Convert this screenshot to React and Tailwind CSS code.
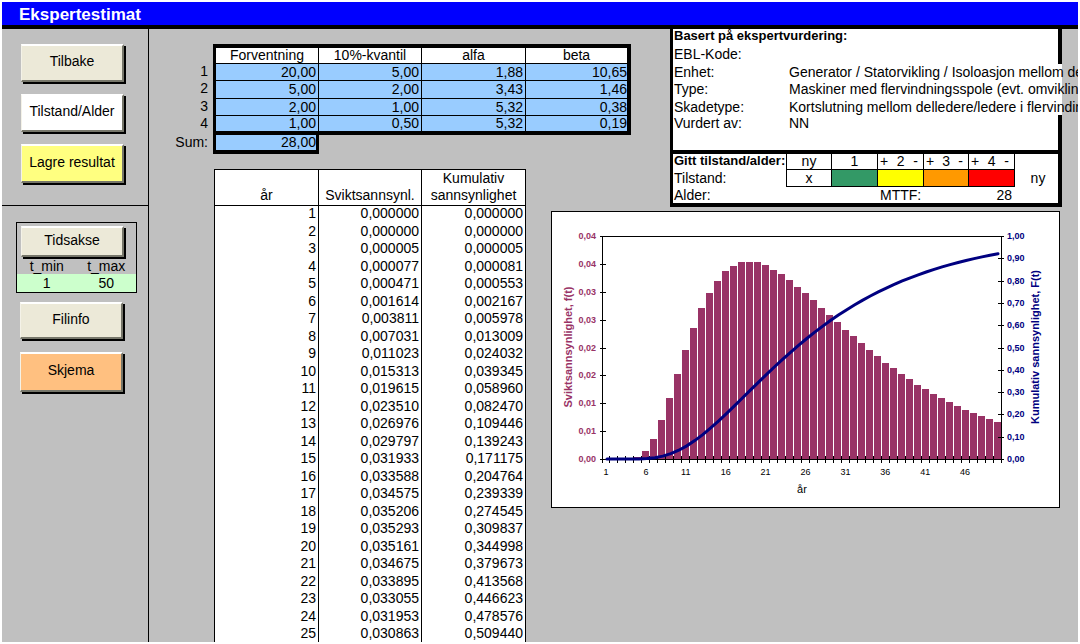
import React from 'react'

const params = [
  ['1', '20,00', '5,00', '1,88', '10,65'],
  ['2', '5,00', '2,00', '3,43', '1,46'],
  ['3', '2,00', '1,00', '5,32', '0,38'],
  ['4', '1,00', '0,50', '5,32', '0,19'],
]

const rows = [
  ['0,000000', '0,000000'],
  ['0,000000', '0,000000'],
  ['0,000005', '0,000005'],
  ['0,000077', '0,000081'],
  ['0,000471', '0,000553'],
  ['0,001614', '0,002167'],
  ['0,003811', '0,005978'],
  ['0,007031', '0,013009'],
  ['0,011023', '0,024032'],
  ['0,015313', '0,039345'],
  ['0,019615', '0,058960'],
  ['0,023510', '0,082470'],
  ['0,026976', '0,109446'],
  ['0,029797', '0,139243'],
  ['0,031933', '0,171175'],
  ['0,033588', '0,204764'],
  ['0,034575', '0,239339'],
  ['0,035206', '0,274545'],
  ['0,035293', '0,309837'],
  ['0,035161', '0,344998'],
  ['0,034675', '0,379673'],
  ['0,033895', '0,413568'],
  ['0,033055', '0,446623'],
  ['0,031953', '0,478576'],
  ['0,030863', '0,509440'],
]

// years 26-50, only shown in the chart
const tail = [
  0.0298, 0.0285, 0.0271, 0.0258, 0.0246, 0.0232, 0.022, 0.0208, 0.0196, 0.0185,
  0.0173, 0.0163, 0.0153, 0.0144, 0.0134, 0.0126, 0.0118, 0.011, 0.0103, 0.0096,
  0.0089, 0.0084, 0.0078, 0.0073, 0.0068,
]

const density = [...rows.map(([f]) => Number(f.replace(',', '.'))), ...tail]

const info = [
  { label: 'Enhet:', value: 'Generator / Statorvikling / Isoloasjon mellom delledere', height: 'h-[17px]' },
  { label: 'Type:', value: 'Maskiner med flervindningsspole (evt. omvikling)', height: 'h-[18px]' },
  { label: 'Skadetype:', value: 'Kortslutning mellom delledere/ledere i flervindingsspole', height: 'h-[16px]' },
]

const Button = ({ children, className }) => (
  <button
    type="button"
    className={`block w-[103px] border-t-2 border-l border-r-2 border-b-2 border-t-white border-l-[#f4f2e8] border-r-[#76766a] border-b-[#76766a] pb-[3px] text-center shadow-[2px_2px_0_#000] ${className}`}
  >
    {children}
  </button>
)

const Sidebar = () => (
  <aside className="w-[147px] shrink-0 border-r border-black">
    <div className="flex flex-col gap-3 border-b border-black pt-[15px] pb-[22px] pl-[19px]">
      <Button className="h-[38px] bg-[#ece9d8]">Tilbake</Button>
      <Button className="h-[38px] bg-white">Tilstand/Alder</Button>
      <Button className="h-[39px] bg-[#ffff80]">Lagre resultat</Button>
    </div>
    <div className="mt-4 ml-[14px] w-[121px] border border-black">
      <div className="pt-[3px] pl-1">
        <Button className="h-[31px] bg-[#ece9d8]">Tidsakse</Button>
      </div>
      <div className="grid grid-cols-2 pt-px text-center leading-[16px]">
        <label htmlFor="tmin">t_min</label>
        <label htmlFor="tmax">t_max</label>
        <input id="tmin" defaultValue="1" className="h-[18px] min-w-0 bg-[#ccffcc] text-center" />
        <input id="tmax" defaultValue="50" className="h-[18px] min-w-0 bg-[#ccffcc] text-center" />
      </div>
    </div>
    <div className="flex flex-col gap-[13px] pt-[9px] pl-[18px]">
      <Button className="h-[37px] bg-[#ece9d8]">Filinfo</Button>
      <Button className="h-[40px] bg-[#ffc080]">Skjema</Button>
    </div>
  </aside>
)

const ParamTable = () => (
  <table className="mt-[15px] w-[482px] table-fixed border-separate border-spacing-0 leading-[15px]">
    <colgroup>
      <col className="w-[64px]" />
      <col className="w-[106px]" />
      <col className="w-[103px]" />
      <col className="w-[104px]" />
      <col className="w-[105px]" />
    </colgroup>
    <thead>
      <tr className="h-[20px]">
        <td />
        <th className="border-t-4 border-r border-b border-l-3 border-black bg-white font-normal">Forventning</th>
        <th className="border-t-4 border-r border-b border-black bg-white font-normal">10%-kvantil</th>
        <th className="border-t-4 border-r border-b border-black bg-white font-normal">alfa</th>
        <th className="border-t-4 border-r-4 border-b border-black bg-white font-normal">beta</th>
      </tr>
    </thead>
    <tbody className="text-right">
      {params.map(([n, ...cells], i) => {
        const bottom = i === 3 ? 'border-b-4' : 'border-b'
        return (
          <tr key={n} className={i === 3 ? 'h-[19px]' : i === 1 ? 'h-[18px]' : 'h-[17px]'}>
            <th className="pr-[5px] align-top font-normal">{n}</th>
            {cells.map((value, c) => (
              <td
                key={c}
                className={`border-black bg-[#99ccff] ${bottom} ${c === 0 ? 'border-l-3' : ''} ${c === 3 ? 'border-r-4' : 'border-r pr-[2px]'}`}
              >
                {value}
              </td>
            ))}
          </tr>
        )
      })}
      <tr className="h-[19px]">
        <th className="pr-[5px] align-top font-normal">Sum:</th>
        <td className="border-r-3 border-b-4 border-l-3 border-black bg-[#99ccff]">28,00</td>
      </tr>
    </tbody>
  </table>
)

const YearTable = () => (
  <table className="mt-[15px] ml-[65px] w-[312px] table-fixed border-separate border-spacing-0 border-l border-black bg-white">
    <colgroup>
      <col className="w-[104px]" />
      <col className="w-[103px]" />
      <col className="w-[104px]" />
    </colgroup>
    <thead>
      <tr className="h-[37px] align-bottom leading-[17px]">
        <th className="border-t border-r border-b border-black pb-px font-normal">år</th>
        <th className="border-t border-r border-b border-black pb-px font-normal">Sviktsannsynl.</th>
        <th className="border-t border-r border-b border-black pb-px font-normal">Kumulativ sannsynlighet</th>
      </tr>
    </thead>
    <tbody className="text-right leading-[14px]">
      {rows.map(([f, cum], i) => (
        <tr key={i} className="h-[18px] align-top even:h-[17px]">
          <td className="border-r border-black pr-[2px]">{i + 1}</td>
          <td className="border-r border-black pr-[2px]">{f}</td>
          <td className="border-r border-black pr-[2px]">{cum}</td>
        </tr>
      ))}
    </tbody>
  </table>
)

const InfoPanel = () => (
  <section className="w-[392px] whitespace-nowrap">
    <div className="border-b-4 border-l-3 border-black bg-white">
      <h2 className="h-[17px] border-r-4 border-black pl-px text-[13px] leading-[14px] font-bold">
        Basert på ekspertvurdering:
      </h2>
      <div className="h-[18px] border-r-4 border-black pl-px leading-[17px]">EBL-Kode:</div>
      {info.map(({ label, value, height }) => (
        <div key={label} className={`flex pl-px leading-[17px] ${height}`}>
          <span className="w-[115px] shrink-0">{label}</span>
          <span>{value}</span>
        </div>
      ))}
      <div className="flex h-[35px] border-r-4 border-black pl-px leading-[17px]">
        <span className="w-[115px] shrink-0">Vurdert av:</span>
        <span>NN</span>
      </div>
    </div>
    <table className="w-full table-fixed border-separate border-spacing-0 border-r-4 border-b-4 border-l-3 border-black bg-white leading-[15px]">
      <colgroup>
        <col className="w-[113px]" />
        <col className="w-[45px]" />
        <col className="w-[46px]" />
        <col className="w-[46px]" />
        <col className="w-[45px]" />
        <col className="w-[46px]" />
        <col className="w-[44px]" />
      </colgroup>
      <tbody>
        <tr className="h-[16px] text-center leading-[14px]">
          <th className="pl-px text-left align-top text-[13px]">Gitt tilstand/alder:</th>
          <td className="border-b border-l border-black align-top">ny</td>
          <td className="border-b border-l border-black align-top">1</td>
          {[2, 3, 4].map((n) => (
            <td key={n} className="border-b border-l border-black pr-[5px] pl-[2px] align-top">
              <div className="flex justify-between">
                <span>+</span>
                <span>{n}</span>
                <span>-</span>
              </div>
            </td>
          ))}
          <td className="border-l border-black" />
        </tr>
        <tr className="h-[17px] text-center">
          <th className="pl-px text-left font-normal">Tilstand:</th>
          <td className="border-b border-l border-black">x</td>
          <td className="border-b border-l border-black bg-[#339966]" />
          <td className="border-b border-l border-black bg-[#ffff00]" />
          <td className="border-b border-l border-black bg-[#ff9900]" />
          <td className="border-b border-l border-black bg-[#ff0000]" />
          <td className="border-l border-black pl-[3px]">ny</td>
        </tr>
        <tr className="h-[16px]">
          <th className="pl-px text-left font-normal">Alder:</th>
          <td />
          <td />
          <td className="pl-[3px]">MTTF:</td>
          <td />
          <td className="pr-[2px] text-right">28</td>
          <td />
        </tr>
      </tbody>
    </table>
  </section>
)

const LEFT = 51
const RIGHT = 450
const TOP = 25
const BOTTOM = 248
const STEP = (RIGHT - LEFT) / 50

const leftLabels = ['0,00', '0,01', '0,01', '0,02', '0,02', '0,03', '0,03', '0,04', '0,04']
const rightLabels = ['0,00', '0,10', '0,20', '0,30', '0,40', '0,50', '0,60', '0,70', '0,80', '0,90', '1,00']

const Chart = () => {
  let sum = 0
  const curve = density
    .map((f, i) => {
      sum += f
      return `${LEFT + STEP * (i + 0.5)},${BOTTOM - 1 - sum * (BOTTOM - TOP)}`
    })
    .join(' ')

  return (
    <svg viewBox="0 0 507 295" className="mt-1 mr-[2px] w-[509px] border border-black bg-white" role="img">
      {density.map((f, i) => {
        const h = Math.round(f * 5620)
        return <rect key={i} x={Math.floor(LEFT + STEP * i)} y={BOTTOM - h} width="7" height={h} fill="#993366" shapeRendering="crispEdges" />
      })}
      <g stroke="#000" shapeRendering="crispEdges">
        <path d={`M${LEFT - 0.5} ${BOTTOM - 0.5}V${TOP - 0.5}H${RIGHT - 0.5}V${BOTTOM - 0.5}Z`} fill="none" />
        {leftLabels.map((_, i) => {
          const y = Math.round(BOTTOM - ((BOTTOM - TOP) / 8) * i) - 0.5
          return <line key={i} x1={LEFT - 3} x2={LEFT + 3} y1={y} y2={y} />
        })}
        {rightLabels.map((_, i) => {
          const y = Math.round(BOTTOM - ((BOTTOM - TOP) / 10) * i) - 0.5
          return <line key={i} x1={RIGHT - 4} x2={RIGHT + 2} y1={y} y2={y} />
        })}
        {Array.from({ length: 51 }, (_, i) => {
          const x = Math.floor(LEFT + STEP * i) - 0.5
          return <line key={i} x1={x} x2={x} y1={BOTTOM - 4} y2={BOTTOM + 3} />
        })}
      </g>
      <polyline points={curve} fill="none" stroke="#000080" strokeWidth="3" strokeLinecap="round" />
      <g fontSize="9" fontWeight="bold">
        {leftLabels.map((t, i) => (
          <text key={i} x={LEFT - 7} y={BOTTOM + 2 - ((BOTTOM - TOP) / 8) * i} textAnchor="end" fill="#993366">{t}</text>
        ))}
        {rightLabels.map((t, i) => (
          <text key={i} x={RIGHT + 5} y={BOTTOM + 2 - ((BOTTOM - TOP) / 10) * i} fill="#000080">{t}</text>
        ))}
      </g>
      <g fontSize="9" textAnchor="middle">
        {Array.from({ length: 10 }, (_, i) => i * 5 + 1).map((n) => (
          <text key={n} x={LEFT + STEP * (n - 0.5) - 1} y="263">{n}</text>
        ))}
      </g>
      <text x="250" y="281" fontSize="11" textAnchor="middle">år</text>
      <g fontSize="11" fontWeight="bold" textAnchor="middle">
        <text transform="translate(20 135) rotate(-90)" fill="#993366">Sviktsannsynlighet, f(t)</text>
        <text transform="translate(487 135) rotate(-90)" fill="#000080">Kumulativ sannsynlighet, F(t)</text>
      </g>
    </svg>
  )
}

export default function App() {
  return (
    <div className="flex h-screen flex-col overflow-hidden bg-white p-[2px] font-['Liberation_Sans',Arial,sans-serif] text-[14px] text-black">
      <header className="h-[27px] shrink-0 border-b-4 border-black bg-[#0000ff] pl-[17px]">
        <h1 className="text-[17px] leading-[26px] font-bold text-white">Ekspertestimat</h1>
      </header>
      <div className="flex min-h-0 flex-1 overflow-x-hidden overflow-y-auto bg-[#c0c0c0] [scrollbar-width:none]">
        <div className="flex min-h-full w-full self-start">
          <Sidebar />
          <main className="flex min-w-0 flex-1">
            <div className="w-[377px] shrink-0">
              <ParamTable />
              <YearTable />
            </div>
            <div className="flex shrink-0 flex-col items-end pl-[25px]">
              <InfoPanel />
              <Chart />
            </div>
          </main>
        </div>
      </div>
    </div>
  )
}
